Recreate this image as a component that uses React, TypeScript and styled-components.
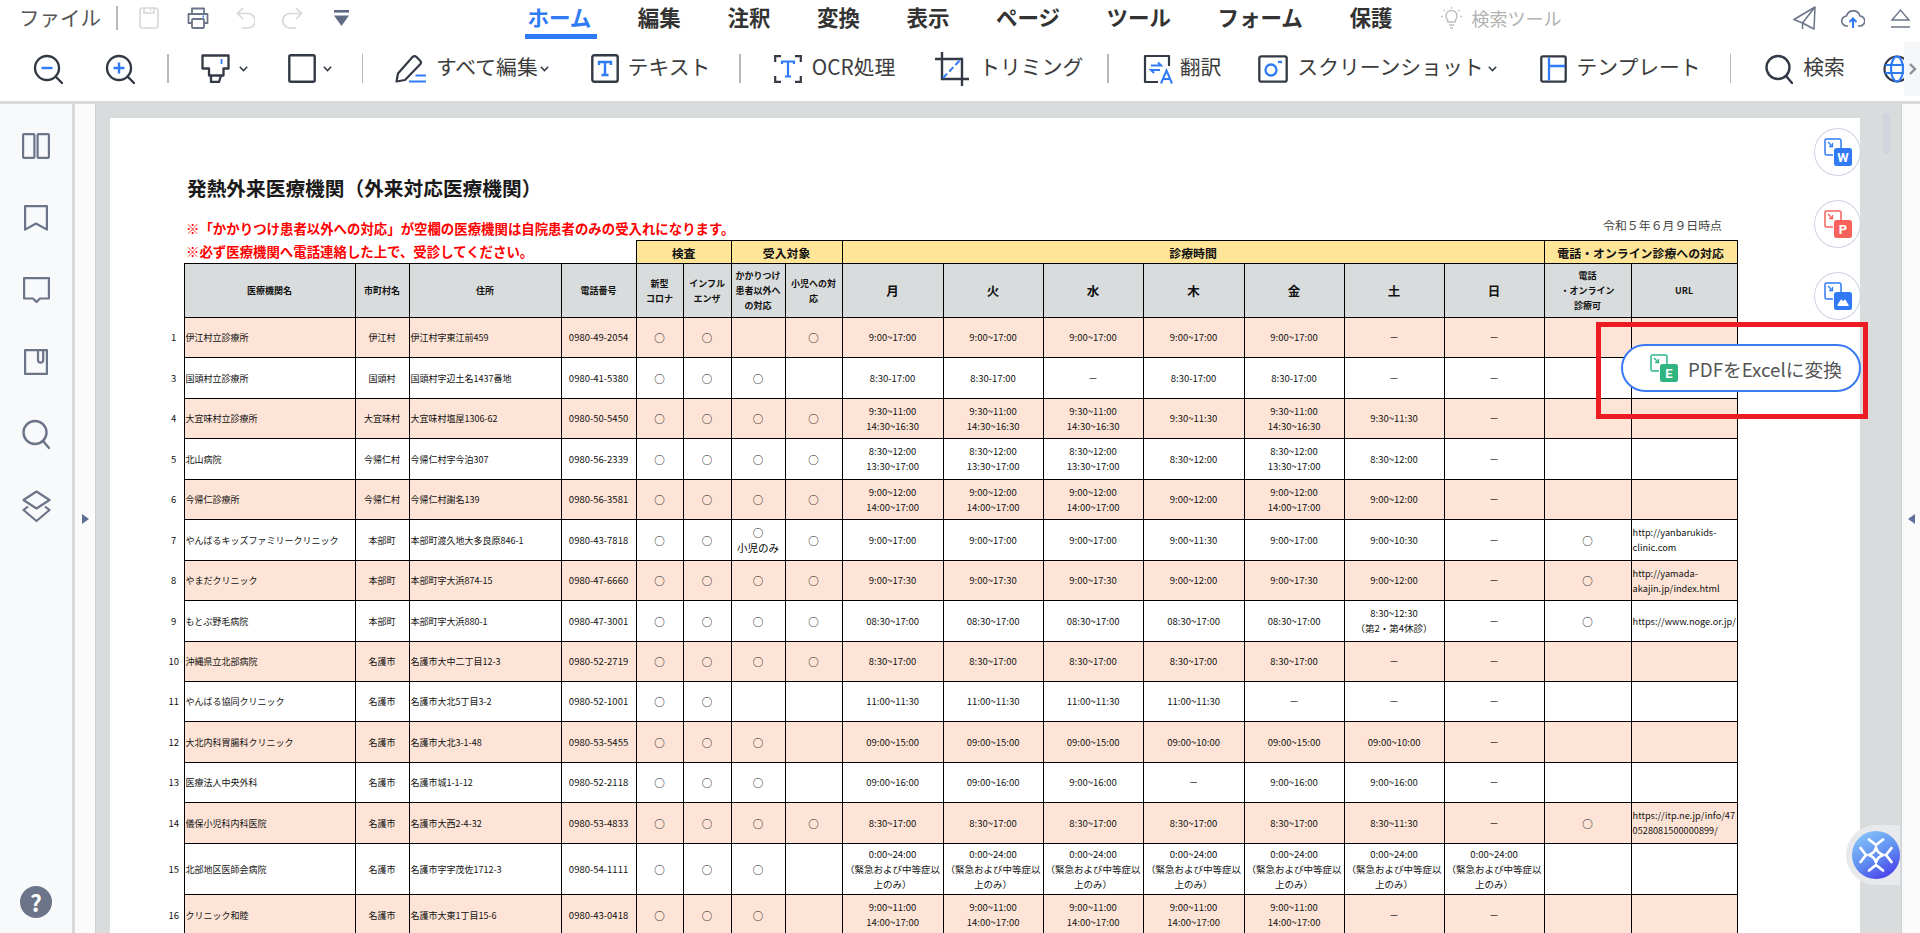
import React from "react";
import styled, { createGlobalStyle } from "styled-components";

const DARK = "#333a46";
const BLUE = "#2f7bf5";
const SLATE = "#6b7488";
const MUTED = "#d8d8d8";

const H1 = "9:00~17:00";
const SHIFT_4 = "9:30~11:00\n14:30~16:30";
const SHIFT_5 = "8:30~12:00\n13:30~17:00";
const SHIFT_6 = "9:00~12:00\n14:00~17:00";
const SHIFT_16 = "9:00~11:00\n14:00~17:00";
const ER = "0:00~24:00\n（緊急および中等症以\n上のみ）";
const NONE = "－";
const O = "○";

const rows = [
  { no: "1", h: 40, name: "伊江村立診療所", city: "伊江村", addr: "伊江村字東江前459", tel: "0980-49-2054", marks: [O, O, "", O], hours: [H1, H1, H1, H1, H1, NONE, NONE], remote: "", url: "" },
  { no: "3", h: 41, name: "国頭村立診療所", city: "国頭村", addr: "国頭村字辺土名1437番地", tel: "0980-41-5380", marks: [O, O, O, ""], hours: ["8:30-17:00", "8:30-17:00", NONE, "8:30-17:00", "8:30-17:00", NONE, NONE], remote: "", url: "" },
  { no: "4", h: 40, name: "大宜味村立診療所", city: "大宜味村", addr: "大宜味村塩屋1306-62", tel: "0980-50-5450", marks: [O, O, O, O], hours: [SHIFT_4, SHIFT_4, SHIFT_4, "9:30~11:30", SHIFT_4, "9:30~11:30", NONE], remote: "", url: "" },
  { no: "5", h: 41, name: "北山病院", city: "今帰仁村", addr: "今帰仁村字今泊307", tel: "0980-56-2339", marks: [O, O, O, O], hours: [SHIFT_5, SHIFT_5, SHIFT_5, "8:30~12:00", SHIFT_5, "8:30~12:00", NONE], remote: "", url: "" },
  { no: "6", h: 40, name: "今帰仁診療所", city: "今帰仁村", addr: "今帰仁村謝名139", tel: "0980-56-3581", marks: [O, O, O, O], hours: [SHIFT_6, SHIFT_6, SHIFT_6, "9:00~12:00", SHIFT_6, "9:00~12:00", NONE], remote: "", url: "" },
  { no: "7", h: 41, name: "やんばるキッズファミリークリニック", city: "本部町", addr: "本部町渡久地大多良原846-1", tel: "0980-43-7818", marks: [O, O, "○\n小児のみ", O], hours: [H1, H1, H1, "9:00~11:30", H1, "9:00~10:30", NONE], remote: O, url: "http://yanbarukids-\nclinic.com" },
  { no: "8", h: 40, name: "やまだクリニック", city: "本部町", addr: "本部町字大浜874-15", tel: "0980-47-6660", marks: [O, O, O, O], hours: ["9:00~17:30", "9:00~17:30", "9:00~17:30", "9:00~12:00", "9:00~17:30", "9:00~12:00", NONE], remote: O, url: "http://yamada-\nakajin.jp/index.html" },
  { no: "9", h: 41, name: "もとぶ野毛病院", city: "本部町", addr: "本部町字大浜880-1", tel: "0980-47-3001", marks: [O, O, O, O], hours: ["08:30~17:00", "08:30~17:00", "08:30~17:00", "08:30~17:00", "08:30~17:00", "8:30~12:30\n（第2・第4休診）", NONE], remote: O, url: "https://www.noge.or.jp/" },
  { no: "10", h: 40, name: "沖縄県立北部病院", city: "名護市", addr: "名護市大中二丁目12-3", tel: "0980-52-2719", marks: [O, O, O, O], hours: ["8:30~17:00", "8:30~17:00", "8:30~17:00", "8:30~17:00", "8:30~17:00", NONE, NONE], remote: "", url: "" },
  { no: "11", h: 40, name: "やんばる協同クリニック", city: "名護市", addr: "名護市大北5丁目3-2", tel: "0980-52-1001", marks: [O, O, "", ""], hours: ["11:00~11:30", "11:00~11:30", "11:00~11:30", "11:00~11:30", NONE, NONE, NONE], remote: "", url: "" },
  { no: "12", h: 41, name: "大北内科胃腸科クリニック", city: "名護市", addr: "名護市大北3-1-48", tel: "0980-53-5455", marks: [O, O, O, ""], hours: ["09:00~15:00", "09:00~15:00", "09:00~15:00", "09:00~10:00", "09:00~15:00", "09:00~10:00", NONE], remote: "", url: "" },
  { no: "13", h: 40, name: "医療法人中央外科", city: "名護市", addr: "名護市城1-1-12", tel: "0980-52-2118", marks: [O, O, O, ""], hours: ["09:00~16:00", "09:00~16:00", "9:00~16:00", NONE, "9:00~16:00", "9:00~16:00", NONE], remote: "", url: "" },
  { no: "14", h: 41, name: "儀保小児科内科医院", city: "名護市", addr: "名護市大西2-4-32", tel: "0980-53-4833", marks: [O, O, O, O], hours: ["8:30~17:00", "8:30~17:00", "8:30~17:00", "8:30~17:00", "8:30~17:00", "8:30~11:30", NONE], remote: O, url: "https://itp.ne.jp/info/47\n0528081500000899/" },
  { no: "15", h: 51, name: "北部地区医師会病院", city: "名護市", addr: "名護市字宇茂佐1712-3", tel: "0980-54-1111", marks: [O, O, O, ""], hours: [ER, ER, ER, ER, ER, ER, ER], remote: "", url: "" },
  { no: "16", h: 41, name: "クリニック和睦", city: "名護市", addr: "名護市大東1丁目15-6", tel: "0980-43-0418", marks: [O, O, O, ""], hours: [SHIFT_16, SHIFT_16, SHIFT_16, SHIFT_16, SHIFT_16, NONE, NONE], remote: "", url: "" },
];

const colWidths = [20, 171, 54, 152, 75, 47, 48, 54, 57, 101, 100, 100, 101, 100, 100, 100, 87, 106];
const days = ["月", "火", "水", "木", "金", "土", "日"];
const tabs = ["ホーム", "編集", "注釈", "変換", "表示", "ページ", "ツール", "フォーム", "保護"];

export default function App() {
  return (
    <Shell>
      <GlobalStyle />
      <Ribbon>
        <TitleRow>
          <FileLabel>ファイル</FileLabel>
          <QuickItem $before={15}><Rule $tall={24} /></QuickItem>
          <QuickItem $before={21}><SaveIcon /></QuickItem>
          <QuickItem $before={28}><PrintIcon /></QuickItem>
          <QuickItem $before={27}><UndoIcon /></QuickItem>
          <QuickItem $before={27}><RedoIcon /></QuickItem>
          <QuickItem $before={31}><MoreIcon /></QuickItem>
          <Tabs>
            {tabs.map((t, i) => (
              <Tab key={t} $active={i === 0}>{t}</Tab>
            ))}
          </Tabs>
          <QuickItem $before={49}><BulbIcon /></QuickItem>
          <FindTools>検索ツール</FindTools>
          <TopRight>
            <SendIcon />
            <CloudIcon />
            <CollapseIcon />
          </TopRight>
        </TitleRow>
        <ToolRow>
          <ToolItem><ZoomIcon /></ToolItem>
          <ToolItem $before={42}><ZoomIcon plus /></ToolItem>
          <ToolItem $before={32}><Rule $tall={29} /></ToolItem>
          <ToolItem $before={32} $gap={9}><MarkerIcon /><Chevron /></ToolItem>
          <ToolItem $before={40} $gap={7}><ShapeIcon /><Chevron /></ToolItem>
          <ToolItem $before={30}><Rule $tall={29} /></ToolItem>
          <ToolItem $before={32} $gap={10}>
            <PencilIcon />
            <ToolLabel>すべて編集</ToolLabel>
            <Chevron $shift={-8} />
          </ToolItem>
          <ToolItem $before={42} $gap={9}><TextIcon /><ToolLabel>テキスト</ToolLabel></ToolItem>
          <ToolItem $before={29}><Rule $tall={29} /></ToolItem>
          <ToolItem $before={33} $gap={10}><OcrIcon /><ToolLabel>OCR処理</ToolLabel></ToolItem>
          <ToolItem $before={40} $gap={10}><CropIcon /><ToolLabel>トリミング</ToolLabel></ToolItem>
          <ToolItem $before={24}><Rule $tall={29} /></ToolItem>
          <ToolItem $before={34} $gap={7}><TranslateIcon /><ToolLabel>翻訳</ToolLabel></ToolItem>
          <ToolItem $before={37} $gap={9}><ShotIcon /><ToolLabel>スクリーンショット</ToolLabel><Chevron $shift={-5} /></ToolItem>
          <ToolItem $before={43} $gap={10}><TemplateIcon /><ToolLabel>テンプレート</ToolLabel></ToolItem>
          <ToolItem $before={29}><Rule $tall={29} /></ToolItem>
          <ToolItem $before={34} $gap={10}><SearchIcon /><ToolLabel>検索</ToolLabel></ToolItem>
          <ToolItem $before={38}><GlobeIcon /></ToolItem>
          <ScrollHint>
            <svg width="9" height="14" viewBox="0 0 9 14">
              <path d="M2 2l5 5-5 5" fill="none" stroke="#8a8f98" strokeWidth="2.4" />
            </svg>
          </ScrollHint>
        </ToolRow>
      </Ribbon>

      <Body>
        <Sidebar>
          <SideSlot><BookIcon /></SideSlot>
          <SideSlot><BookmarkIcon /></SideSlot>
          <SideSlot><CommentIcon /></SideSlot>
          <SideSlot><ClipIcon /></SideSlot>
          <SideSlot><SearchIcon color={SLATE} /></SideSlot>
          <SideSlot><LayersIcon /></SideSlot>
          <HelpBadge>?</HelpBadge>
        </Sidebar>
        <FoldPanel>
          <FoldArrow $dir="right" />
        </FoldPanel>
        <Viewer>
          <Page>
            <PageTitle>発熱外来医療機関（外来対応医療機関）</PageTitle>
            <NoteRow>
              <RedNote>※「かかりつけ患者以外への対応」が空欄の医療機関は自院患者のみの受入れになります。</RedNote>
              <AsOf>令和５年６月９日時点</AsOf>
            </NoteRow>
            <ClinicTable>
              <colgroup>
                {colWidths.map((w, i) => (
                  <col key={i} style={{ width: w }} />
                ))}
              </colgroup>
              <tbody>
                <tr style={{ height: 23 }}>
                  <NoteCell colSpan={5}>
                    <RedNote>※必ず医療機関へ電話連絡した上で、受診してください。</RedNote>
                  </NoteCell>
                  <GroupCell colSpan={2}>検査</GroupCell>
                  <GroupCell colSpan={2}>受入対象</GroupCell>
                  <GroupCell colSpan={7}>診療時間</GroupCell>
                  <GroupCell colSpan={2}>電話・オンライン診療への対応</GroupCell>
                </tr>
                <tr style={{ height: 54 }}>
                  <NumCell />
                  <HeadCell>医療機関名</HeadCell>
                  <HeadCell>市町村名</HeadCell>
                  <HeadCell>住所</HeadCell>
                  <HeadCell>電話番号</HeadCell>
                  <HeadCell>{"新型\nコロナ"}</HeadCell>
                  <HeadCell>{"インフル\nエンザ"}</HeadCell>
                  <HeadCell>{"かかりつけ\n患者以外へ\nの対応"}</HeadCell>
                  <HeadCell>{"小児への対\n応"}</HeadCell>
                  {days.map((d) => (
                    <DayCell key={d}>{d}</DayCell>
                  ))}
                  <HeadCell>{"電話\n・オンライン\n診療可"}</HeadCell>
                  <HeadCell>URL</HeadCell>
                </tr>
                {rows.map((r, i) => (
                  <tr key={r.no} style={{ height: r.h }}>
                    <NumCell>{r.no}</NumCell>
                    <NameCell $tint={i % 2 === 0} $left>{r.name}</NameCell>
                    <NameCell $tint={i % 2 === 0}>{r.city}</NameCell>
                    <NameCell $tint={i % 2 === 0} $left>{r.addr}</NameCell>
                    <DataCell $tint={i % 2 === 0}>{r.tel}</DataCell>
                    {r.marks.map((m, j) => (
                      <MarkCell key={j} $tint={i % 2 === 0}>{m}</MarkCell>
                    ))}
                    {r.hours.map((h, j) => (
                      <DataCell key={j} $tint={i % 2 === 0}>{h}</DataCell>
                    ))}
                    <MarkCell $tint={i % 2 === 0}>{r.remote}</MarkCell>
                    <UrlCell $tint={i % 2 === 0} $left>{r.url}</UrlCell>
                  </tr>
                ))}
              </tbody>
            </ClinicTable>
          </Page>
          <ScrollThumb />
        </Viewer>
        <RightStrip>
          <FoldArrow $dir="left" />
        </RightStrip>
      </Body>

      <RedFrame />
      <ConvertRail>
        <ConvertCircle><ConvertIcon color="#3279f5" mark="W" /></ConvertCircle>
        <ConvertCircle><ConvertIcon color="#f8625a" mark="P" /></ConvertCircle>
        <ConvertCircle><ConvertIcon color="#3279f5" /></ConvertCircle>
        <ConvertPill>
          <ConvertIcon color="#2fb482" mark="E" />
          PDFをExcelに変換
        </ConvertPill>
      </ConvertRail>
      <AssistantDock>
        <AssistantIcon />
      </AssistantDock>
    </Shell>
  );
}

function ZoomIcon({ plus }: { plus?: boolean }) {
  return (
    <svg width="30" height="30" viewBox="0 0 30 30" fill="none" strokeWidth="2.4">
      <circle cx="14" cy="14" r="12" stroke={DARK} />
      <path d="M22.5 22.5L29 29" stroke={DARK} strokeLinecap="round" />
      <path d={plus ? "M8.5 14h11M14 8.5v11" : "M8.5 14h11"} stroke={BLUE} />
    </svg>
  );
}

function MarkerIcon() {
  return (
    <svg width="29" height="29" viewBox="0 0 29 29" fill="none" stroke={DARK} strokeWidth="2.3" strokeLinejoin="round">
      <path d="M1.5 1.5h26v13h-5v7H8v-7H1.5z" />
      <path d="M10 21.5V28h8l2-6.5" />
      <path d="M20.5 5v5" stroke={BLUE} strokeWidth="1.8" />
    </svg>
  );
}

function ShapeIcon() {
  return (
    <svg width="28" height="29" viewBox="0 0 28 29" fill="none">
      <rect x="1.3" y="1.3" width="25.4" height="26.4" rx="1.5" stroke={DARK} strokeWidth="2.4" />
    </svg>
  );
}

function PencilIcon() {
  return (
    <svg width="31" height="29" viewBox="0 0 31 29" fill="none" strokeWidth="2.2">
      <path d="M1.5 27.5l1.5-8L17.5 3q2-2 4 0l3.5 3.5q2 2 0 4L10 26z" stroke={DARK} strokeLinejoin="round" />
      <path d="M20.5 21.5H31M14 27.5h17" stroke={BLUE} />
    </svg>
  );
}

function TextIcon() {
  return (
    <svg width="28" height="29" viewBox="0 0 28 29" fill="none" strokeWidth="2.4">
      <rect x="1.3" y="1.3" width="25.4" height="26.4" rx="2" stroke={DARK} />
      <path d="M8 11V8h12v3M14 8v13M10.5 21h7" stroke={BLUE} />
    </svg>
  );
}

function OcrIcon() {
  return (
    <svg width="28" height="28" viewBox="0 0 28 28" fill="none" strokeWidth="2.2">
      <path d="M1.2 7V1.2H7M21 1.2h5.8V7M1.2 21v5.8H7M21 26.8h5.8V21" stroke={DARK} />
      <path d="M8 9V6.5h12V9M14 6.5v15M11 21.5h6" stroke={BLUE} />
    </svg>
  );
}

function CropIcon() {
  return (
    <svg width="34" height="34" viewBox="0 0 34 34" fill="none" strokeWidth="2.4">
      <path d="M7 0v27h27M0 7h27v27" stroke={DARK} />
      <path d="M8 26L27 6" stroke={BLUE} strokeDasharray="6 3" strokeWidth="2" />
    </svg>
  );
}

function TranslateIcon() {
  return (
    <svg width="30" height="30" viewBox="0 0 30 30" fill="none" strokeWidth="2.2">
      <path d="M26 12V2H2v26h13" stroke={DARK} strokeLinejoin="round" />
      <path d="M8 11.5h10l-3-3M17 16H8l3 3M18 29.5l5.5-13 5.5 13M20 25h7" stroke={BLUE} strokeWidth="2" />
    </svg>
  );
}

function ShotIcon() {
  return (
    <svg width="30" height="28" viewBox="0 0 30 28" fill="none" strokeWidth="2.3">
      <rect x="1.3" y="1.3" width="27.4" height="25.4" rx="2" stroke={DARK} />
      <circle cx="13" cy="15" r="5.5" stroke={BLUE} />
      <path d="M20 7h4" stroke={BLUE} />
    </svg>
  );
}

function TemplateIcon() {
  return (
    <svg width="27" height="28" viewBox="0 0 27 28" fill="none" strokeWidth="2.3">
      <rect x="1.3" y="1.3" width="24.4" height="25.4" rx="1.5" stroke={DARK} />
      <path d="M9 2.5v23M9 11h16" stroke={BLUE} />
    </svg>
  );
}

function SearchIcon({ color = DARK }: { color?: string }) {
  return (
    <svg width="28" height="30" viewBox="0 0 28 30" fill="none" stroke={color} strokeWidth="2.4">
      <circle cx="13" cy="13.5" r="11.5" />
      <path d="M21 22l6 7" strokeLinecap="round" />
    </svg>
  );
}

function GlobeIcon() {
  return (
    <svg width="28" height="28" viewBox="0 0 28 28" fill="none" strokeWidth="2.2">
      <circle cx="14" cy="14" r="12.5" stroke={DARK} />
      <ellipse cx="14" cy="14" rx="6" ry="12.5" stroke={BLUE} />
      <path d="M2 10h24M2 18h24" stroke={BLUE} />
    </svg>
  );
}

function Chevron({ $shift = 0 }: { $shift?: number }) {
  return (
    <svg width="9" height="6" viewBox="0 0 9 6" fill="none" style={{ marginLeft: $shift }}>
      <path d="M.8.8l3.7 3.8L8.2.8" stroke={DARK} strokeWidth="1.5" />
    </svg>
  );
}

function SaveIcon() {
  return (
    <svg width="20" height="22" viewBox="0 0 20 22" fill="none" stroke={MUTED} strokeWidth="1.6">
      <rect x="1" y="1" width="18" height="20" rx="2.5" />
      <path d="M5 1v5h10V1M11 3h1.5" />
    </svg>
  );
}

function PrintIcon() {
  return (
    <svg width="22" height="22" viewBox="0 0 22 22" fill="none" stroke={SLATE} strokeWidth="1.8" strokeLinejoin="round">
      <path d="M5 7V1.5h12V7M5 16H1.5V7h19v9H17" />
      <rect x="5" y="12" width="12" height="9" rx="1" />
      <path d="M15.5 9.5h1.5" stroke={BLUE} />
    </svg>
  );
}

function UndoIcon() {
  return (
    <svg width="19" height="22" viewBox="0 0 19 22" fill="none" stroke={MUTED} strokeWidth="1.7">
      <path d="M7 1L1.5 6.5 7 12M1.5 6.5H12a6 6 0 0 1 0 14.5H6" />
    </svg>
  );
}

function RedoIcon() {
  return (
    <svg width="21" height="22" viewBox="0 0 21 22" fill="none" stroke={MUTED} strokeWidth="1.7">
      <path d="M14 1l5.5 5.5L14 12M19.5 6.5H8a6 6 0 0 0 0 14.5h6" />
    </svg>
  );
}

function MoreIcon() {
  return (
    <svg width="15" height="16" viewBox="0 0 15 16" fill="#5f6b85">
      <rect width="15" height="2.6" />
      <path d="M0 5.5h15L7.5 16z" />
    </svg>
  );
}

function BulbIcon() {
  return (
    <svg width="21" height="22" viewBox="0 0 21 22" fill="none" stroke="#bdbdbd" strokeWidth="1.4">
      <path d="M7 15c0-2.500-2-3-2-6a5.500 5.500 0 0 1 11 0c0 3-2 3.500-2 6zM8 18h5M9 21h3" />
      <path d="M10.500 0v1.500M2.500 3l1.200 1.200M18.500 3l-1.200 1.200M0 9.500h1.800M19.200 9.500H21" />
    </svg>
  );
}

function SendIcon() {
  return (
    <svg width="23" height="24" viewBox="0 0 23 24" fill="none" stroke={SLATE} strokeWidth="1.5" strokeLinejoin="round">
      <path d="M22 1L1 13.500l8.500 3.500L21 23zM22 1L9.500 17v6" />
    </svg>
  );
}

function CloudIcon() {
  return (
    <svg width="24" height="22" viewBox="0 0 24 22" fill="none" strokeWidth="1.6">
      <path d="M7 19H6A5 5 0 0 1 5.500 9a7 7 0 0 1 13.500 0 5 5 0 0 1-.5 10H17" stroke={SLATE} />
      <path d="M12 21v-9M8.500 15l3.500-3.500 3.500 3.500" stroke={BLUE} strokeWidth="2" />
    </svg>
  );
}

function CollapseIcon() {
  return (
    <svg width="21" height="20" viewBox="0 0 21 20" fill="none" stroke={SLATE} strokeWidth="1.4">
      <path d="M2 12L10.500 2 19 12zM1 19h19" />
    </svg>
  );
}

function BookIcon() {
  return (
    <svg width="28" height="26" viewBox="0 0 28 26" fill="none" stroke={SLATE} strokeWidth="2.2">
      <rect x="1.1" y="1.1" width="11.300" height="23.800" rx="1" />
      <rect x="15.600" y="1.100" width="11.300" height="23.800" rx="1" />
    </svg>
  );
}

function BookmarkIcon() {
  return (
    <svg width="24" height="26" viewBox="0 0 24 26" fill="none" stroke={SLATE} strokeWidth="2.2" strokeLinejoin="round">
      <path d="M1.100 1.100h21.800v23.500L12 18.500 1.100 24.600z" />
    </svg>
  );
}

function CommentIcon() {
  return (
    <svg width="27" height="26" viewBox="0 0 27 26" fill="none" stroke={SLATE} strokeWidth="2.2" strokeLinejoin="round">
      <path d="M1.100 1.100h24.800v20.400H17L13.500 25 10 21.500H1.100z" />
    </svg>
  );
}

function ClipIcon() {
  return (
    <svg width="24" height="26" viewBox="0 0 24 26" fill="none" stroke={SLATE} strokeWidth="2.2" strokeLinejoin="round">
      <path d="M1.100 1.100h21.800v23.800H1.100zM14 1.100v10a2.600 2.600 0 0 0 5.200 0v-10" />
    </svg>
  );
}

function LayersIcon() {
  return (
    <svg width="29" height="33" viewBox="0 0 29 33" fill="none" stroke={SLATE} strokeWidth="2.2" strokeLinejoin="round">
      <path d="M14.500 1.500L27.500 10l-13 8.500L1.500 10z" />
      <path d="M6 16.500L1.500 20l13 11 13-11-4.500-3.500" />
    </svg>
  );
}

function ConvertIcon({ color, mark }: { color: string; mark?: string }) {
  return (
    <svg width="28" height="28" viewBox="0 0 28 28" fill="none">
      <path d="M9 17H2.500A1.500 1.500 0 0 1 1 15.500v-13A1.500 1.500 0 0 1 2.500 1h13A1.500 1.500 0 0 1 17 2.500V10" stroke={color} strokeWidth="1.500" />
      <path d="M4 4l4.500 4.500M8.500 5v3.500H5" stroke={color} strokeWidth="1.300" />
      <rect x="10" y="10" width="18" height="18" rx="2.500" fill={color} />
      {mark ? (
        <text x="19" y="24" textAnchor="middle" fill="#fff" fontSize="13" fontWeight="700" fontFamily="Roboto, sans-serif">
          {mark}
        </text>
      ) : (
        <path d="M14 24q-1 0-.5-1l3-5q.8-1.200 1.600 0l.9 1.400 1-1.400q.8-1 1.600 0l3 5q.5 1-.5 1z" fill="#fff" />
      )}
    </svg>
  );
}

function AssistantIcon() {
  return (
    <svg width="48" height="48" viewBox="0 0 48 48" fill="none">
      <defs>
        <linearGradient id="assistantFill" x1="0.1" y1="0.1" x2="0.6" y2="1">
          <stop offset="0" stopColor="#84c0fa" />
          <stop offset="0.55" stopColor="#5f8ff0" />
          <stop offset="1" stopColor="#4c48ea" />
        </linearGradient>
      </defs>
      <circle cx="24" cy="24" r="24" fill="url(#assistantFill)" />
      <g stroke="#fff" strokeWidth="2.800" strokeLinecap="round" strokeLinejoin="round">
        <path d="M24 16.500q1.500 6 7.500 7.500-6 1.500-7.500 7.500-1.500-6-7.500-7.500 6-1.500 7.500-7.500z" />
        <path d="M17 8.500l7 5.500 7-5.500M17 39.500l7-5.500 7 5.500M8.500 17l5.500 7-5.500 7M39.500 17L34 24l5.500 7" />
      </g>
    </svg>
  );
}

const GlobalStyle = createGlobalStyle`
  html, body {
    margin: 0;
    height: 100%;
    overflow: hidden;
  }
  body {
    font-family: "Noto Sans CJK JP", "Noto Sans", sans-serif;
    color: #333;
  }
`;

const Shell = styled.div`
  position: relative;
  display: flex;
  flex-direction: column;
  height: 100vh;
  overflow: hidden;
  background: #fff;
`;

const Ribbon = styled.header`
  flex: none;
  height: 104px;
  box-sizing: border-box;
  border-bottom: 3px solid #d9d9d9;
  background: #fff;
`;

const TitleRow = styled.div`
  display: flex;
  align-items: center;
  height: 36px;
  margin-bottom: 4px;
  padding-left: 19px;
`;

const FileLabel = styled.span`
  font-size: 20.5px;
  color: #555;
  line-height: 36px;
  margin-top: -2px;
`;

const QuickItem = styled.div<{ $before: number }>`
  display: flex;
  align-items: center;
  margin-left: ${(p) => p.$before}px;
  flex: none;
`;

const Rule = styled.span<{ $tall: number }>`
  display: block;
  width: 1.5px;
  height: ${(p) => p.$tall}px;
  background: #b9b9b9;
`;

const Tabs = styled.nav`
  display: flex;
  gap: 46.5px;
  margin-left: 179px;
  align-self: flex-start;
`;

const Tab = styled.span<{ $active?: boolean }>`
  position: relative;
  font-size: 21.5px;
  font-weight: 700;
  line-height: 34px;
  color: ${(p) => (p.$active ? "#2f7bf5" : "#333")};

  &::after {
    content: "";
    display: ${(p) => (p.$active ? "block" : "none")};
    position: absolute;
    left: -3px;
    right: -6px;
    top: 34px;
    height: 5px;
    background: #2f7bf5;
  }
`;

const FindTools = styled.span`
  margin-left: 9px;
  font-size: 18px;
  color: #b2b2b2;
`;

const TopRight = styled.div`
  display: flex;
  align-items: center;
  gap: 25px;
  margin-left: auto;
  padding-right: 9px;
`;

const ToolRow = styled.div`
  position: relative;
  display: flex;
  align-items: center;
  height: 57px;
  padding-left: 33px;
  overflow: hidden;
`;

const ToolItem = styled.div<{ $before?: number; $gap?: number }>`
  display: flex;
  align-items: center;
  flex: none;
  gap: ${(p) => p.$gap ?? 0}px;
  margin-left: ${(p) => p.$before ?? 0}px;
`;

const ToolLabel = styled.span`
  font-size: 20.8px;
  line-height: 30px;
  margin-top: -5px;
  color: #3c3c3c;
  white-space: nowrap;
`;

const ScrollHint = styled.div`
  position: absolute;
  right: 0;
  top: 2px;
  width: 16px;
  height: 54px;
  display: flex;
  align-items: center;
  justify-content: center;
  background: #f5f6f8;
`;

const Body = styled.main`
  flex: 1;
  display: flex;
  min-height: 0;
`;

const Sidebar = styled.aside`
  flex: none;
  width: 72px;
  box-sizing: content-box;
  display: flex;
  flex-direction: column;
  align-items: center;
  padding: 6px 0 15px;
  border-right: 3px solid #d9d9d9;
  background: #f8f9fa;
`;

const SideSlot = styled.div`
  flex: none;
  height: 72px;
  display: flex;
  align-items: center;
  justify-content: center;
`;

const HelpBadge = styled.div`
  margin-top: auto;
  width: 32px;
  height: 32px;
  border-radius: 50%;
  background: #6b7488;
  color: #fff;
  font-size: 23px;
  font-weight: 700;
  line-height: 32px;
  text-align: center;
`;

const FoldPanel = styled.div`
  flex: none;
  width: 20px;
  display: flex;
  align-items: center;
  justify-content: center;
  border-right: 1px solid #cfd2d4;
  background: #fbfbfc;
`;

const FoldArrow = styled.span<{ $dir: "left" | "right" }>`
  width: 0;
  height: 0;
  border-top: 5px solid transparent;
  border-bottom: 5px solid transparent;
  border-left: ${(p) => (p.$dir === "right" ? "7px solid #5f6f96" : "0")};
  border-right: ${(p) => (p.$dir === "left" ? "7px solid #5f6f96" : "0")};
`;

const Viewer = styled.div`
  position: relative;
  flex: 1;
  min-width: 0;
  padding: 14px 41px 0 14px;
  background: #d9dcdd;
  overflow: hidden;
`;

const Page = styled.section`
  height: 100%;
  padding: 57px 0 0 54px;
  background: #fff;
  box-sizing: content-box;
`;

const PageTitle = styled.h1`
  margin: 0 0 17px 23px;
  font-size: 19.7px;
  font-weight: 700;
  line-height: 26px;
  color: #1a1a1a;
`;

const NoteRow = styled.div`
  display: flex;
  justify-content: space-between;
  align-items: flex-start;
  box-sizing: content-box;
  width: 1536px;
  height: 22px;
  padding-left: 22px;
`;

const RedNote = styled.span`
  font-size: 13.42px;
  font-weight: 700;
  line-height: 20px;
  color: #ff0000;
  white-space: nowrap;
`;

const AsOf = styled.span`
  font-size: 11.9px;
  line-height: 14px;
  color: #444;
`;

const ClinicTable = styled.table`
  table-layout: fixed;
  width: 1573px;
  border-collapse: collapse;
  color: #111;
  font-size: 9.5px;
  line-height: 15px;
  white-space: pre-line;
`;

const NoteCell = styled.td`
  padding: 0 0 2px 22px;
  border: 0;
`;

const GroupCell = styled.td`
  padding: 0;
  border: 1px solid #000;
  background: #ffe597;
  font-size: 11.9px;
  font-weight: 700;
  text-align: center;
`;

const NumCell = styled.td`
  padding: 0;
  border: 0;
  font-size: 9.5px;
  text-align: center;
`;

const HeadCell = styled.td`
  padding: 0;
  border: 1px solid #000;
  background: #d9dcdc;
  font-size: 9px;
  font-weight: 700;
  text-align: center;
`;

const DayCell = styled(HeadCell)`
  font-size: 12.5px;
`;

const DataCell = styled.td<{ $tint?: boolean; $left?: boolean }>`
  padding: ${(p) => (p.$left ? "0 0 0 1px" : "0")};
  border: 1px solid #000;
  background: ${(p) => (p.$tint ? "#fde4d6" : "#fff")};
  text-align: ${(p) => (p.$left ? "left" : "center")};
  white-space: pre;
`;

const NameCell = styled(DataCell)`
  font-size: 9px;
`;

const MarkCell = styled(DataCell)`
  font-size: 10.5px;
  color: #000;
`;

const UrlCell = styled(DataCell)`
  font-size: 9.2px;
  overflow: hidden;
`;

const ScrollThumb = styled.div`
  position: absolute;
  top: 9px;
  right: 11px;
  width: 7px;
  height: 41px;
  border-radius: 4px;
  background: #cfd4df;
`;

const RightStrip = styled.div`
  flex: none;
  width: 18px;
  display: flex;
  align-items: center;
  justify-content: center;
  border-left: 1px solid #cfd2d4;
  background: #fafafa;
`;

const RedFrame = styled.div`
  position: absolute;
  left: 1596px;
  top: 322px;
  width: 272px;
  height: 97px;
  box-sizing: border-box;
  border: 5px solid #ed1c24;
`;

const ConvertRail = styled.div`
  position: absolute;
  top: 128px;
  right: 59px;
  display: flex;
  flex-direction: column;
  align-items: flex-end;
  gap: 24px;
`;

const ConvertCircle = styled.div`
  width: 47px;
  height: 48px;
  box-sizing: border-box;
  display: flex;
  align-items: center;
  justify-content: center;
  border: 1.5px solid #cfd3e0;
  border-radius: 50%;
  background: #fff;
`;

const ConvertPill = styled.div`
  width: 240px;
  height: 48px;
  box-sizing: border-box;
  display: flex;
  align-items: center;
  gap: 10px;
  padding-left: 27px;
  border: 2px solid #3b7af0;
  border-radius: 24px;
  background: #fff;
  font-size: 18.7px;
  color: #555;
  white-space: nowrap;
`;

const AssistantDock = styled.div`
  position: absolute;
  top: 825px;
  left: 1846px;
  width: 54px;
  height: 60px;
  display: flex;
  align-items: center;
  justify-content: flex-end;
  border-radius: 30px 0 0 30px;
  background: #e7e9ec;
`;
